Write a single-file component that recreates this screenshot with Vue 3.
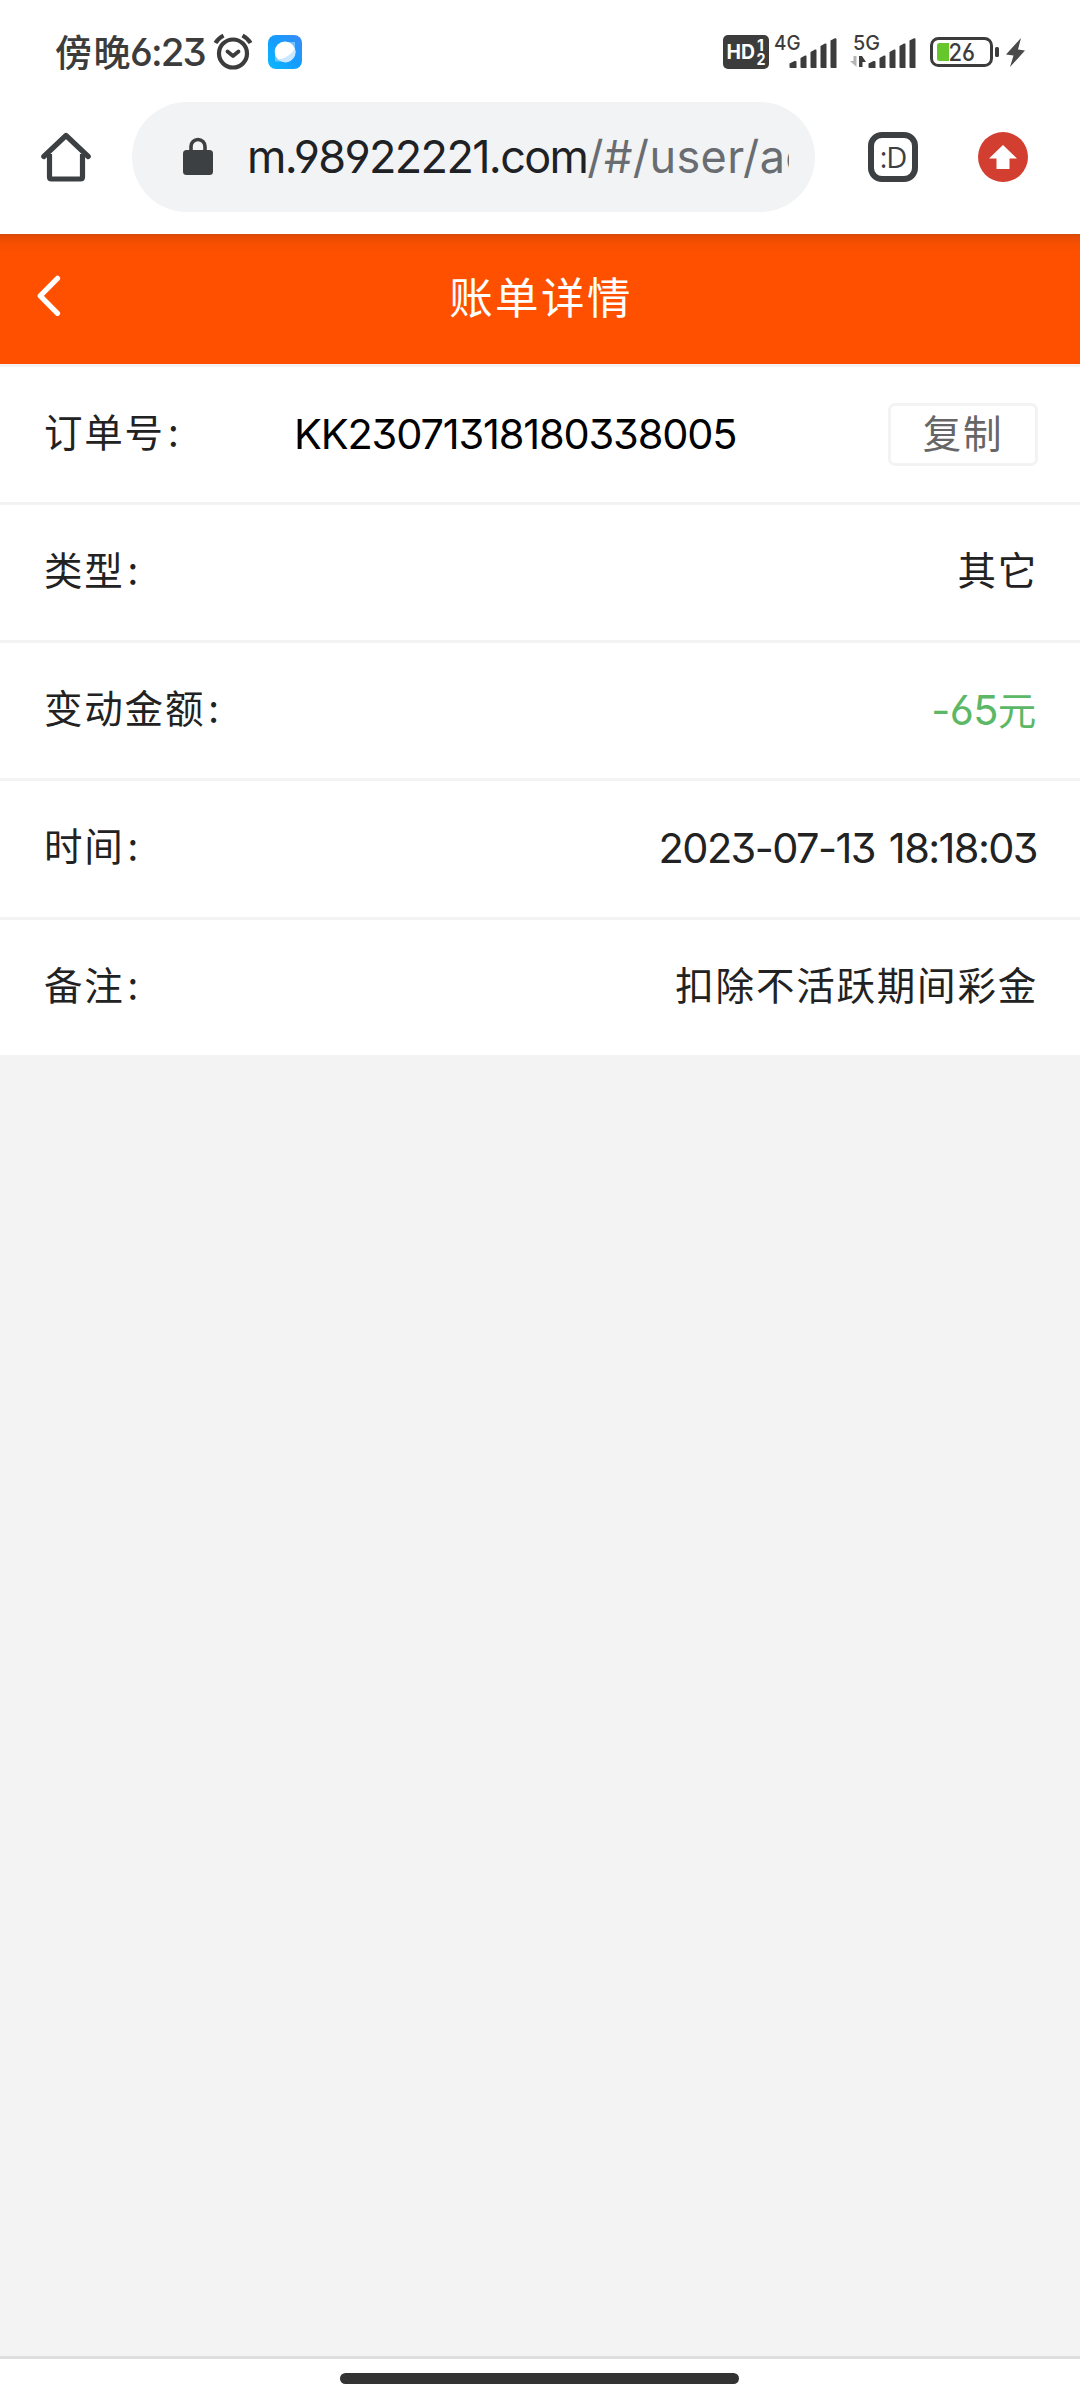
<script setup>
const rows = [
  { label: '类型', value: '其它', kind: 'cjk' },
  { label: '变动金额', value: '-65', unit: '元', kind: 'amount' },
  { label: '时间', value: '2023-07-13 18:18:03', kind: 'date' },
  { label: '备注', value: '扣除不活跃期间彩金', kind: 'cjk' },
]
const bars = [
  'M0 25.5 L5 23 Q7 22.500 7 24 V30 H1 Q0 30 0 29Z',
  'M11 20 L15.500 17.500 Q17 17 17 18.500 V30 H12 Q11 30 11 29Z',
  'M21 14 L25.500 11.500 Q27 11 27 12.500 V30 H22 Q21 30 21 29Z',
  'M31 8 L35.500 5.500 Q37 5 37 6.500 V30 H32 Q31 30 31 29Z',
  'M41 2.500 L45.500 .3 Q47 0 47 1.500 V30 H42 Q41 30 41 29Z',
]
</script>

<template>
  <div class="screen">
    <div class="status">
      <span class="clock-cjk">傍晚</span>
      <span class="clock">6:23</span>
      <svg class="alarm" width="40" height="38" viewBox="0 0 40 38" fill="none" stroke="#3c3c3c">
        <circle cx="20" cy="20.500" r="14" stroke-width="4.200" />
        <path d="M14.500 18.500 L20 23 L25.500 18.500" stroke-width="3.800" stroke-linecap="round" stroke-linejoin="round" />
        <path d="M2.500 10 Q5 5.500 10.500 2.500 M29.500 2.500 Q35 5.500 37.500 10" stroke-width="4.200" stroke-linecap="butt" />
      </svg>
      <svg class="app" width="34" height="34" viewBox="0 0 34 34">
        <defs>
          <linearGradient id="appBg" x1="1" y1="0" x2="0" y2="1">
            <stop offset="0" stop-color="#3a8bf5" />
            <stop offset=".5" stop-color="#149dff" />
            <stop offset="1" stop-color="#0ab9ff" />
          </linearGradient>
        </defs>
        <rect width="34" height="34" rx="8" fill="url(#appBg)" />
        <path d="M7 18 V26.500 H16Z M18 7 H27 V15Z" fill="#8fd2ff" opacity=".75" />
        <circle cx="17" cy="16.800" r="10.300" fill="#fff" />
        <path d="M27 13.500 A10.300 10.300 0 0 1 10 24.300 C17 24 24 19 27 13.500Z" fill="#c9e8ff" />
      </svg>
      <span class="grow"></span>
      <svg class="hd" width="46" height="34" viewBox="0 0 46 34">
        <rect width="46" height="34" rx="5" fill="#3c3c3c" />
        <g fill="#fff" font-family="Inter, sans-serif" font-weight="700">
          <text x="3.500" y="24" font-size="19.500" textLength="28.500" lengthAdjust="spacingAndGlyphs">HD</text>
          <text x="34" y="15.500" font-size="16">1</text>
          <text x="33.500" y="30" font-size="16" textLength="9" lengthAdjust="spacingAndGlyphs">2</text>
        </g>
      </svg>
      <svg class="sig4" width="64" height="34" viewBox="0 0 64 34" fill="#3c3c3c">
        <text x="0" y="15.300" font-family="Inter, sans-serif" font-size="20.500" font-weight="500" textLength="26.500" lengthAdjust="spacingAndGlyphs">4G</text>
        <g transform="translate(15.500 3)"><path v-for="b in bars" :key="b" :d="b" /></g>
      </svg>
      <svg class="sig5" width="67" height="34" viewBox="0 0 67 34" fill="#3c3c3c">
        <text x="3" y="15.300" font-family="Inter, sans-serif" font-size="20.500" font-weight="500" textLength="27" lengthAdjust="spacingAndGlyphs">5G</text>
        <path d="M6.500 21 V32 L0 26 H3.500 V21Z" fill="#b4b4b4" />
        <path d="M9 21 H12 L16 27 H12.500 V32 H9Z" />
        <g transform="translate(18.500 3)"><path v-for="b in bars" :key="b" :d="b" /></g>
      </svg>
      <svg class="battery" width="70" height="30" viewBox="0 0 70 30">
        <rect x="1.500" y="1.500" width="60" height="27" rx="7" fill="none" stroke="#3c3c3c" stroke-width="3" />
        <rect x="65" y="10" width="4" height="10" rx="1.500" fill="#3c3c3c" />
        <path d="M9.500 6 H19 V24 H9.500 Q7 24 7 21.500 V8.500 Q7 6 9.500 6Z" fill="#66c72d" />
        <text x="18.500" y="23.800" font-family="Inter, sans-serif" font-size="24" font-weight="500" fill="#3c3c3c" textLength="26.500" lengthAdjust="spacingAndGlyphs">26</text>
      </svg>
      <svg class="bolt" width="19" height="29" viewBox="0 0 19 29">
        <path d="M15 0 L0 16.500 L7.500 17.500 L4 29 L19 12.500 L12 11.500Z" fill="#4a4a4a" />
      </svg>
    </div>

    <div class="toolbar">
      <svg class="home" width="50" height="50" viewBox="0 0 50 50" fill="none" stroke="#3c4043" stroke-width="5.200" stroke-linejoin="round">
        <path d="M8.500 22 V45 Q8.500 47 10.500 47 H39.500 Q41.500 47 41.500 45 V22" />
        <path d="M2.800 24.500 L25 3.500 L47.200 24.500" stroke-linecap="round" />
      </svg>
      <div class="omnibox">
        <svg class="lock" width="30" height="38" viewBox="0 0 30 38">
          <path d="M8 14 V9.500 A7 7 0 0 1 22 9.500 V14" fill="none" stroke="#3c4043" stroke-width="3.600" />
          <rect y="13" width="30" height="25" rx="3.500" fill="#3c4043" />
        </svg>
        <div class="url"><span class="host">m.98922221.com</span><span class="path">/#/user/ac</span></div>
      </div>
      <div class="tabs">:D</div>
      <svg class="update" width="50" height="50" viewBox="0 0 50 50">
        <circle cx="25" cy="25" r="25" fill="#d23f31" />
        <path d="M25 13 L39 26.500 H31.500 V37 H18.500 V26.500 H11Z" fill="#fff" />
      </svg>
    </div>

    <header class="header">
      <svg class="back" width="24" height="42" viewBox="0 0 24 42">
        <path d="M20.500 3.300 L3.200 20.800 L20.500 38.300" fill="none" stroke="#fff" stroke-width="5.200" stroke-linecap="round" stroke-linejoin="round" />
      </svg>
      <h1>账单详情</h1>
    </header>

    <main class="list">
      <div class="row first">
        <span class="label">订单号<i>:</i></span>
        <span class="order">KK23071318180338005</span>
        <button class="copy">复制</button>
      </div>
      <div v-for="r in rows" :key="r.label" class="row" :class="{ tall: r.kind === 'date' }">
        <span class="label">{{ r.label }}<i>:</i></span>
        <span class="value" :class="r.kind">{{ r.value }}<b v-if="r.unit">{{ r.unit }}</b></span>
      </div>
    </main>

    <footer class="navbar"><div class="handle"></div></footer>
  </div>
</template>

<style>
body {
  background: #f3f3f3;
}
</style>

<style scoped>
.screen {
  width: 1080px;
  height: 2400px;
  display: flex;
  flex-direction: column;
  background: #f3f3f3;
  font-family: Inter, "Noto Sans CJK SC", sans-serif;
  font-feature-settings: "cv03", "cv04", "cv09";
  overflow: hidden;
}
.status {
  height: 102px;
  display: flex;
  align-items: flex-start;
  background: #fff;
  color: #3c3c3c;
  padding: 0 55px;
  box-sizing: border-box;
  flex: none;
  white-space: nowrap;
}
.status svg {
  flex: none;
  overflow: visible;
}
.clock-cjk {
  width: 75px;
  margin-top: 23px;
  font: 500 37px/56px "Noto Sans CJK SC", sans-serif;
  letter-spacing: 1.500px;
}
.clock {
  width: 83px;
  margin-top: 24px;
  font-weight: 500;
  font-size: 38.500px;
  line-height: 56px;
  letter-spacing: -1.900px;
}
.alarm { margin-top: 33px; }
.app { margin: 35px 0 0 15px; }
.grow { flex: 1; }
.hd { margin: 35px 5px 0 0; }
.sig4 { margin: 35px 12px 0 0; }
.sig5 { margin: 35px 13px 0 0; }
.battery { margin: 37px 6px 0 0; }
.bolt { margin-top: 37.500px; }
.toolbar {
  height: 132px;
  flex: none;
  background: #fff;
  display: flex;
  align-items: flex-start;
}
.home { margin: 30px 41px 0 41px; }
.omnibox {
  width: 683px;
  height: 110px;
  border-radius: 55px;
  background: #f1f3f4;
  display: flex;
  box-sizing: border-box;
  padding-left: 51px;
}
.lock { margin: 35px 34px 0 0; }
.url {
  width: 542px;
  overflow: hidden;
  white-space: nowrap;
  font-size: 45px;
  line-height: 110px;
  color: #202124;
}
.host { letter-spacing: -1.650px; }
.path { color: #696c70; letter-spacing: .4px; }
.tabs {
  width: 50px;
  height: 50px;
  margin: 30px 60px 0 53px;
  border: 6px solid #3c4043;
  border-radius: 14px;
  box-sizing: border-box;
  color: #3c4043;
  font: 500 29px/37px "Open Sans", sans-serif;
  letter-spacing: -1px;
  text-align: center;
}
.update { margin-top: 30px; }
.header {
  height: 130px;
  flex: none;
  background: linear-gradient(#d84a08 0, #ea4c04 4px, #f74f01 10px, #ff5000 20px);
  display: grid;
  grid-template-columns: 100px 1fr 100px;
}
.back { margin: 41px 0 0 37px; }
h1 {
  margin: 0;
  color: #fff;
  font: 400 43.500px/124px "Noto Sans CJK SC", sans-serif;
  letter-spacing: 2.400px;
  text-align: center;
  padding-left: 2px;
}
.list { display: flex; flex-direction: column; gap: 3px; padding-top: 3px; }
.row {
  height: 135px;
  background: #fff;
  display: flex;
  justify-content: space-between;
  padding: 0 42px 0 44px;
  line-height: 127px;
  color: #222;
  white-space: nowrap;
}
.row.tall { height: 136px; }
.label {
  font-family: "Noto Sans CJK SC", sans-serif;
  font-size: 38.500px;
  letter-spacing: 1.800px;
}
.label i { font-style: normal; margin-left: 3px; }
.order {
  width: 594px;
  font-size: 41.500px;
  line-height: 135px;
  letter-spacing: -1.160px;
  color: #000;
}
.row.first .label { width: 250px; }
.copy {
  width: 150px;
  height: 63px;
  margin: 36px 0 0;
  padding: 0 0 6px;
  border: 3px solid #f3f3f3;
  border-radius: 7px;
  box-sizing: border-box;
  background: #fff;
  color: #666;
  font: 400 38.500px/51px "Noto Sans CJK SC", sans-serif;
  letter-spacing: 1.800px;
}
.cjk {
  font-family: "Noto Sans CJK SC", sans-serif;
  font-size: 38.500px;
  letter-spacing: 1.800px;
}
.date, .amount { font-size: 41.500px; line-height: 134px; }
.date {
  letter-spacing: -1.600px;
  word-spacing: 4px;
  padding-right: 1px;
}
.amount { color: #5cb866; letter-spacing: -.7px; }
.amount b { font: 400 38.500px/1 "Noto Sans CJK SC", sans-serif; letter-spacing: 1.800px; }
.navbar {
  margin-top: auto;
  height: 44px;
  box-sizing: border-box;
  border-top: 3px solid #dedede;
  background: #fff;
}
.handle {
  width: 399px;
  height: 11px;
  margin: 14px 0 0 340px;
  border-radius: 6px;
  background: #333;
}
</style>
